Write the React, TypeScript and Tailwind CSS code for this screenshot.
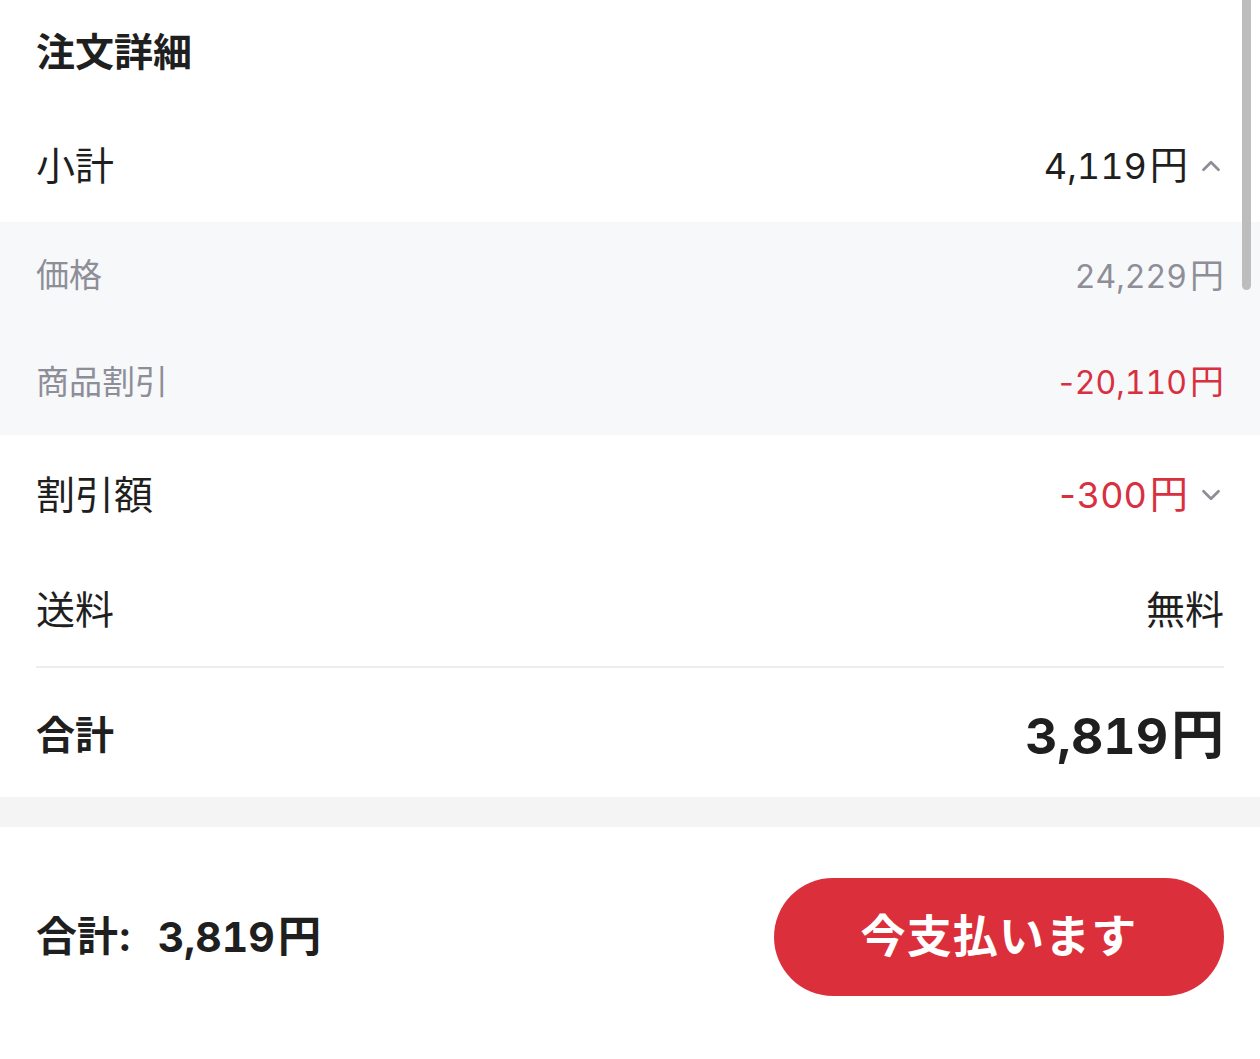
import { ChevronDown, ChevronUp } from "lucide-react";

const font = { fontFamily: 'Inter, "Noto Sans CJK JP", sans-serif' };

function Yen({ amount, className }: { amount: string; className?: string }) {
  const neg = amount.startsWith("-");
  return (
    <span className={className}>
      {neg && <span className="mr-[1px]">-</span>}
      <span className="tabular-nums">{neg ? amount.slice(1) : amount}</span>
      <span className="ml-[3px] text-[1.06em]">円</span>
    </span>
  );
}

function Row({
  label,
  className,
  labelClass,
  children,
}: {
  label: string;
  className?: string;
  labelClass?: string;
  children?: React.ReactNode;
}) {
  return (
    <div className={`flex items-center justify-between px-9 ${className ?? ""}`}>
      <span className={labelClass ?? "text-[39px]"}>{label}</span>
      <span className="flex items-center">{children}</span>
    </div>
  );
}

export default function App() {
  return (
    <div className="relative w-[1260px] h-[1059px] bg-white text-[#1f1f1f] overflow-hidden" style={font}>
      <div className="absolute right-[9px] top-0 w-[9px] h-[290px] rounded-b-full bg-[#bdbdbd]" />

      <section className="bg-white">
        <h1 className="h-[110px] flex items-center pb-[6px] px-9 text-[39px] font-bold">注文詳細</h1>

        <Row label="小計" className="h-[112px] text-[36px]">
          <Yen amount="4,119" />
          <ChevronUp className="w-[30px] h-[30px] ml-[8px] mr-[-2px] text-[#8e8e99]" strokeWidth={2.2} />
        </Row>

        <div className="bg-[#f7f8fa] text-[32px] text-[#8e8e99]">
          <Row label="価格" labelClass="text-[33px]" className="h-[108px]">
            <Yen amount="24,229" />
          </Row>
          <Row label="商品割引" labelClass="text-[33px]" className="h-[105px]">
            <Yen amount="-20,110" className="text-[#d8303f]" />
          </Row>
        </div>

        <Row label="割引額" className="h-[120px] text-[36px]">
          <Yen amount="-300" className="text-[#d8303f]" />
          <ChevronDown className="w-[30px] h-[30px] ml-[8px] mr-[-2px] text-[#8e8e99]" strokeWidth={2.2} />
        </Row>

        <Row label="送料" className="h-[111px] text-[39px]">
          無料
        </Row>

        <div className="mx-9 h-[2px] bg-[#ededed]" />

        <div className="flex items-center justify-between px-9 pt-[6px] h-[129px]">
          <span className="text-[39px] font-bold">合計</span>
          <Yen amount="3,819" className="text-[50px] font-bold" />
        </div>
      </section>

      <div className="h-[30px] bg-[#f4f4f4]" />

      <footer className="flex items-center justify-between px-9 pt-[51px]">
        <span className="text-[41px] font-bold flex items-center">
          合計:
          <Yen amount="3,819" className="ml-[26px]" />
        </span>
        <button className="w-[450px] h-[118px] rounded-full bg-[#dc2f3c] text-white text-[45px] font-bold tracking-wide">
          今支払います
        </button>
      </footer>
    </div>
  );
}
